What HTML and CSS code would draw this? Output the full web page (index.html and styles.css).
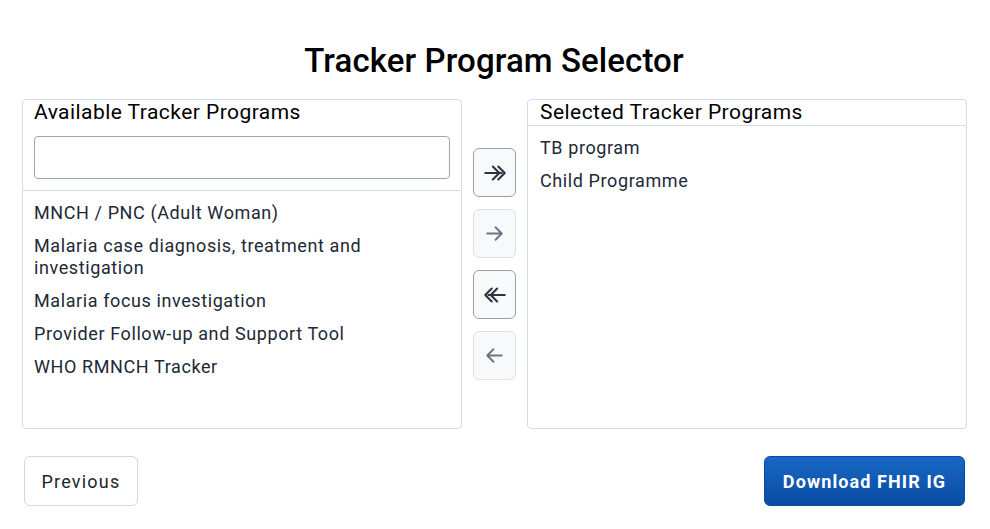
FILE: index.html
```html
<!DOCTYPE html>
<html lang="en">
<head>
<meta charset="utf-8">
<title>Tracker Program Selector</title>
<link rel="stylesheet" href="styles.css">
</head>
<body>
<div class="page">
  <h1 class="title">Tracker Program Selector</h1>
  <div class="selector">
    <div class="panel">
      <div class="panel-head">
        <div class="panel-title">Available Tracker Programs</div>
        <input class="search" type="text">
      </div>
      <ul class="list">
        <li>MNCH / PNC (Adult Woman)</li>
        <li>Malaria case diagnosis, treatment and investigation</li>
        <li>Malaria focus investigation</li>
        <li>Provider Follow-up and Support Tool</li>
        <li>WHO RMNCH Tracker</li>
      </ul>
    </div>
    <div class="controls">
      <button class="move active" aria-label="Move all right">
        <svg viewBox="0 0 24 24" width="26" height="26"><path d="M3 12h15M10 6l6 6-6 6M15 6l6 6-6 6" fill="none" stroke="currentColor" stroke-width="1.9" stroke-linecap="round" stroke-linejoin="round"/></svg>
      </button>
      <button class="move" aria-label="Move right">
        <svg viewBox="0 0 24 24" width="25" height="25"><path d="M5 12h14M13 6l6 6-6 6" fill="none" stroke="currentColor" stroke-width="1.8" stroke-linecap="round" stroke-linejoin="round"/></svg>
      </button>
      <button class="move active" aria-label="Move all left">
        <svg viewBox="0 0 24 24" width="26" height="26"><path d="M21 12H6M14 6l-6 6 6 6M9 6l-6 6 6 6" fill="none" stroke="currentColor" stroke-width="1.9" stroke-linecap="round" stroke-linejoin="round"/></svg>
      </button>
      <button class="move" aria-label="Move left">
        <svg viewBox="0 0 24 24" width="25" height="25"><path d="M19 12H5M11 6l-6 6 6 6" fill="none" stroke="currentColor" stroke-width="1.8" stroke-linecap="round" stroke-linejoin="round"/></svg>
      </button>
    </div>
    <div class="panel">
      <div class="panel-head simple">
        <div class="panel-title">Selected Tracker Programs</div>
      </div>
      <ul class="list selected">
        <li>TB program</li>
        <li>Child Programme</li>
      </ul>
    </div>
  </div>
  <div class="footer">
    <button class="btn-secondary">Previous</button>
    <button class="btn-primary">Download FHIR IG</button>
  </div>
</div>
</body>
</html>
```
FILE: styles.css
```css
* { box-sizing: border-box; }
html, body { margin: 0; padding: 0; background: #fff; }
body { font-family: Roboto, "Noto Sans", "Liberation Sans", sans-serif; color: #212529; }
.page { padding: 42px 24px 0 22px; }
.title {
  margin: 0 0 19px;
  text-align: center;
  font-size: 33px;
  font-weight: 500;
  line-height: 38px;
  color: #000;
  letter-spacing: 0.1px;
}
.selector {
  display: grid;
  grid-template-columns: 440px 43px 440px;
  column-gap: 11px;
  height: 330px;
}
.panel {
  border: 1px solid #d5dde6;
  border-radius: 4px;
  display: flex;
  flex-direction: column;
  overflow: hidden;
}
.panel-head {
  padding: 0 11px 11px;
  border-bottom: 1px solid #d5dde6;
}
.panel-head.simple { padding: 0 12px; }
.panel-title {
  font-size: 21px;
  line-height: 25px;
  color: #000;
  letter-spacing: 0.45px;
}
.search {
  display: block;
  width: 100%;
  height: 43px;
  margin-top: 11px;
  border: 1px solid #9ba6b3;
  border-radius: 4px;
  font: inherit;
  padding: 0 10px;
}
.list {
  list-style: none;
  margin: 0;
  padding: 11px 11px 0;
}
.list.selected { padding-left: 12px; }
.list li {
  font-size: 18px;
  line-height: 22px;
  padding-right: 70px;
  margin-bottom: 11px;
  color: #212936;
  letter-spacing: 0.6px;
}
.controls {
  display: flex;
  flex-direction: column;
  justify-content: center;
  gap: 12px;
}
.move {
  width: 43px;
  height: 49px;
  padding: 0;
  display: flex;
  align-items: center;
  justify-content: center;
  background: #f8f9fb;
  border: 1px solid #dde2e8;
  border-radius: 6px;
  color: #6b7684;
}
.move.active {
  border-color: #97a1ad;
  color: #2c3440;
}
.footer {
  display: flex;
  justify-content: space-between;
  margin-top: 27px;
  padding-left: 2px;
}
.btn-secondary {
  height: 50px;
  width: 114px;
  padding: 0;
  background: #fff;
  border: 1px solid #d3d7dc;
  border-radius: 6px;
  font-family: inherit;
  font-size: 18px;
  color: #212529;
  letter-spacing: 1.2px;
}
.btn-primary {
  height: 50px;
  width: 201px;
  padding: 0;
  margin-right: 1px;
  background: linear-gradient(180deg, #1767c4 0%, #0a4ca3 100%);
  border: 1px solid #0b4a9c;
  border-radius: 6px;
  font-family: inherit;
  font-size: 18px;
  font-weight: 700;
  color: #fff;
  letter-spacing: 1.1px;
}
```
